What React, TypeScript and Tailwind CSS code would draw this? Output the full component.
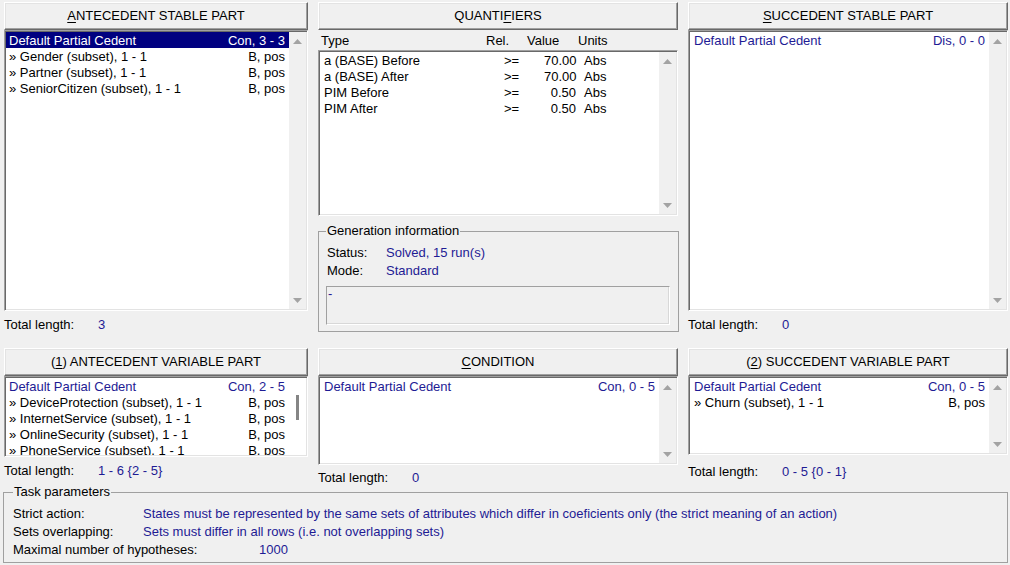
import React from 'react';

type Row = { left: string; right: string; blue?: boolean; selected?: boolean };

const antecedentStable: Row[] = [
  { left: 'Default Partial Cedent', right: 'Con, 3 - 3', selected: true },
  { left: '» Gender (subset), 1 - 1', right: 'B, pos' },
  { left: '» Partner (subset), 1 - 1', right: 'B, pos' },
  { left: '» SeniorCitizen (subset), 1 - 1', right: 'B, pos' },
];

const antecedentVariable: Row[] = [
  { left: 'Default Partial Cedent', right: 'Con, 2 - 5', blue: true },
  { left: '» DeviceProtection (subset), 1 - 1', right: 'B, pos' },
  { left: '» InternetService (subset), 1 - 1', right: 'B, pos' },
  { left: '» OnlineSecurity (subset), 1 - 1', right: 'B, pos' },
  { left: '» PhoneService (subset), 1 - 1', right: 'B, pos' },
];

const quantifiers = [
  { type: 'a (BASE) Before', rel: '>=', value: '70.00', units: 'Abs' },
  { type: 'a (BASE) After', rel: '>=', value: '70.00', units: 'Abs' },
  { type: 'PIM Before', rel: '>=', value: '0.50', units: 'Abs' },
  { type: 'PIM After', rel: '>=', value: '0.50', units: 'Abs' },
];

const Btn = ({ children }: { children: React.ReactNode }) => (
  <div className="h-[28px] w-full shrink-0 flex items-center justify-center bg-[#f0f0f0] border border-t-white border-l-white border-r-[#696969] border-b-[#696969] shadow-[inset_-1px_-1px_0_#a0a0a0,inset_1px_1px_0_#e3e3e3] text-[13px]">
    {children}
  </div>
);

const Arrow = ({ down }: { down?: boolean }) => (
  <svg width="9" height="5" viewBox="0 0 9 5">
    <polygon points={down ? '0,0 9,0 4.5,5' : '0,5 4.5,0 9,5'} fill="#a3a3a3" />
  </svg>
);

const ScrollBar = () => (
  <div className="w-[17px] shrink-0 bg-[#f0f0f0] flex flex-col items-center justify-between pt-[7px] pb-[6px]">
    <Arrow />
    <Arrow down />
  </div>
);

const ThinScrollBar = () => (
  <div className="w-[17px] shrink-0 bg-white flex flex-col items-center pt-[17px]">
    <div className="w-[3px] h-[25px] bg-[#858585] ml-[-1px]" />
  </div>
);

const ListBox = ({
  className,
  children,
  thin,
}: {
  className: string;
  children: React.ReactNode;
  thin?: boolean;
}) => (
  <div
    className={`flex shrink-0 bg-white overflow-hidden border border-t-[#a0a0a0] border-l-[#a0a0a0] border-r-white border-b-white shadow-[inset_1px_1px_0_#696969,inset_-1px_-1px_0_#e3e3e3] p-[1px] ${className}`}
  >
    <div className="flex-1 min-w-0 overflow-hidden">{children}</div>
    {thin ? <ThinScrollBar /> : <ScrollBar />}
  </div>
);

const ListRow = ({ row, pl }: { row: Row; pl: string }) => (
  <div
    className={`h-[16px] flex items-start justify-between pt-[2px] leading-[14px] pr-[4px] whitespace-nowrap ${pl} ${
      row.selected ? 'bg-[#000080] text-white' : row.blue ? 'text-[#1e1b94]' : 'text-black'
    }`}
  >
    <span>{row.left}</span>
    <span>{row.right}</span>
  </div>
);

const TotalLength = ({ value, mt }: { value: string; mt: string }) => (
  <div className={`flex h-[16px] items-center whitespace-nowrap ${mt}`}>
    <span className="w-[94px]">Total length:</span>
    <span className="text-[#1e1b94]">{value}</span>
  </div>
);

const U = ({ children }: { children: React.ReactNode }) => <span className="underline underline-offset-2">{children}</span>;

export default function App() {
  return (
    <div className="w-[1010px] h-[565px] bg-[#f0f0f0] overflow-hidden pt-[2px] text-[13px] leading-[16px] text-black font-['Liberation_Sans',Arial,sans-serif]">
      {/* top row */}
      <div className="flex h-[346px] pl-[4px]">
        <div className="w-[304px] flex flex-col">
          <Btn>
            <span>
              <U>A</U>NTECEDENT STABLE PART
            </span>
          </Btn>
          <ListBox className="h-[281px]">
            {antecedentStable.map((r) => (
              <ListRow key={r.left} row={r} pl="pl-[3px]" />
            ))}
          </ListBox>
          <TotalLength value="3" mt="mt-[6px]" />
        </div>

        <div className="w-[360px] ml-[10px] flex flex-col">
          <Btn>
            <span>
              QUANTI<U>F</U>IERS
            </span>
          </Btn>
          <div className="h-[20px] flex items-center pl-[3px] pt-[1px] whitespace-nowrap">
            <span className="w-[165px]">Type</span>
            <span className="w-[41px]">Rel.</span>
            <span className="w-[51px]">Value</span>
            <span>Units</span>
          </div>
          <ListBox className="h-[166px]">
            {quantifiers.map((q) => (
              <div key={q.type} className="h-[16px] flex items-start pt-[2px] leading-[14px] pl-[4px] whitespace-nowrap">
                <span className="w-[180px]">{q.type}</span>
                <span className="w-[40px]">{q.rel}</span>
                <span className="w-[32px] text-right">{q.value}</span>
                <span className="ml-[8px]">{q.units}</span>
              </div>
            ))}
          </ListBox>
          <fieldset className="mt-[8px] h-[108px] border border-[#a0a0a0] pl-[8px] pr-[8px]">
            <legend className="px-[1px] leading-[14px] ml-[-1px]">Generation information</legend>
            <div className="flex h-[18px] items-center mt-[6px] whitespace-nowrap">
              <span className="w-[59px]">Status:</span>
              <span className="text-[#1e1b94]">Solved, 15 run(s)</span>
            </div>
            <div className="flex h-[18px] items-center whitespace-nowrap">
              <span className="w-[59px]">Mode:</span>
              <span className="text-[#1e1b94]">Standard</span>
            </div>
            <div className="mt-[6px] ml-[-1px] w-[344px] h-[39px] border border-t-[#a0a0a0] border-l-[#a0a0a0] border-r-white border-b-white shadow-[inset_-1px_-1px_0_#d8d8d8] text-[#1e1b94] leading-[12px] pl-[1px] pt-[1px]">
              -
            </div>
          </fieldset>
        </div>

        <div className="w-[320px] ml-[10px] flex flex-col">
          <Btn>
            <span>
              <U>S</U>UCCEDENT STABLE PART
            </span>
          </Btn>
          <ListBox className="h-[281px]">
            <ListRow row={{ left: 'Default Partial Cedent', right: 'Dis, 0 - 0', blue: true }} pl="pl-[4px]" />
          </ListBox>
          <TotalLength value="0" mt="mt-[6px]" />
        </div>
      </div>

      {/* bottom row */}
      <div className="flex h-[137px] pl-[4px]">
        <div className="w-[304px] flex flex-col">
          <Btn>
            <span>
              (<U>1</U>) ANTECEDENT VARIABLE PART
            </span>
          </Btn>
          <ListBox className="h-[81px]" thin>
            {antecedentVariable.map((r) => (
              <ListRow key={r.left} row={r} pl="pl-[3px]" />
            ))}
          </ListBox>
          <TotalLength value="1 - 6 {2 - 5}" mt="mt-[6px]" />
        </div>

        <div className="w-[360px] ml-[10px] flex flex-col">
          <Btn>
            <span>
              <U>C</U>ONDITION
            </span>
          </Btn>
          <ListBox className="h-[89px]">
            <ListRow row={{ left: 'Default Partial Cedent', right: 'Con, 0 - 5', blue: true }} pl="pl-[4px]" />
          </ListBox>
          <TotalLength value="0" mt="mt-[5px]" />
        </div>

        <div className="w-[320px] ml-[10px] flex flex-col">
          <Btn>
            <span>
              (<U>2</U>) SUCCEDENT VARIABLE PART
            </span>
          </Btn>
          <ListBox className="h-[79px]">
            <ListRow row={{ left: 'Default Partial Cedent', right: 'Con, 0 - 5', blue: true }} pl="pl-[4px]" />
            <ListRow row={{ left: '» Churn (subset), 1 - 1', right: 'B, pos' }} pl="pl-[4px]" />
          </ListBox>
          <TotalLength value="0 - 5 {0 - 1}" mt="mt-[9px]" />
        </div>
      </div>

      {/* task parameters */}
      <fieldset className="ml-[3px] w-[1005px] h-[78px] border border-[#a0a0a0] px-[9px]">
        <legend className="px-[1px] leading-[14px]">Task parameters</legend>
        <div className="flex h-[18px] items-center mt-[6px] whitespace-nowrap">
          <span className="w-[130px]">Strict action:</span>
          <span className="text-[#1e1b94]">
            States must be represented by the same sets of attributes which differ in coeficients only (the strict meaning of an action)
          </span>
        </div>
        <div className="flex h-[18px] items-center whitespace-nowrap">
          <span className="w-[130px]">Sets overlapping:</span>
          <span className="text-[#1e1b94]">Sets must differ in all rows (i.e. not overlapping sets)</span>
        </div>
        <div className="flex h-[18px] items-center whitespace-nowrap">
          <span className="w-[246px]">Maximal number of hypotheses:</span>
          <span className="text-[#1e1b94]">1000</span>
        </div>
      </fieldset>
    </div>
  );
}
